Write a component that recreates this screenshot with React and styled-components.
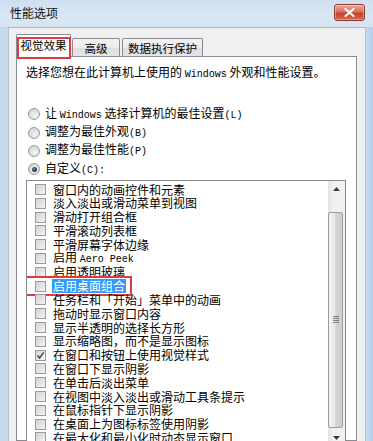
import styled, { createGlobalStyle } from 'styled-components';

const GlobalStyle = createGlobalStyle`
  html, body {
    margin: 0;
    padding: 0;
    background: #bcd3ea;
  }
  body {
    font-family: "Noto Sans CJK SC", "Noto Sans", sans-serif;
    color: #000;
  }
`;

const Window = styled.div`
  width: 373px;
  height: 441px;
  overflow: hidden;
  display: flex;
  flex-direction: column;
  background: linear-gradient(90deg, #c4d8ec 0%, #d4e3f2 30%, #dbe7f3 75%, #d2e1f1 97%, #b3cde9 100%);
`;

const TitleBar = styled.div`
  height: 27px;
  flex: none;
  display: flex;
  align-items: center;
  justify-content: space-between;
  padding: 0 8px 0 10px;
  background: linear-gradient(180deg, #cfdff0 0%, #d9e6f3 60%, #d6e4f2 100%);
`;

const Title = styled.span`
  font-size: 12px;
  line-height: 16px;
  margin-top: -2px;
  color: #111;
`;

const CloseButton = styled.div`
  width: 29px;
  height: 15px;
  margin-top: -3px;
  border: 1px solid #8b3b2c;
  border-radius: 3px;
  display: flex;
  align-items: center;
  justify-content: center;
  background: linear-gradient(180deg, #e9a89a 0%, #d9735f 45%, #c5432b 55%, #d6684f 100%);
  box-shadow: inset 0 0 0 1px rgba(255, 255, 255, 0.35);
`;

const Client = styled.div`
  flex: 1;
  margin: 0 7px 0 8px;
  padding: 6px 8px 0 7px;
  background: #f0f0f0;
  border-top: 1px solid #a9b8c8;
  border-left: 1px solid #b3c2d1;
  border-right: 1px solid #b3c2d1;
  display: flex;
  flex-direction: column;
  min-height: 0;
`;

const TabRow = styled.div`
  display: flex;
  align-items: flex-end;
  height: 22px;
  flex: none;
  position: relative;
  z-index: 1;
`;

const Tab = styled.div`
  position: relative;
  box-sizing: border-box;
  display: flex;
  align-items: center;
  justify-content: center;
  white-space: nowrap;
  font-size: 11.5px;
  border: 1px solid #898c95;
  border-bottom: none;
  border-radius: 2px 2px 0 0;
  flex: none;
  margin-right: ${({ $active }) => ($active ? '1px' : '2px')};
  height: ${({ $active }) => ($active ? '23px' : '18px')};
  margin-bottom: ${({ $active }) => ($active ? '-1px' : '0')};
  padding-bottom: ${({ $active }) => ($active ? '2px' : '0')};
  width: ${({ $w }) => $w}px;
  background: ${({ $active }) => ($active ? '#fff' : 'linear-gradient(180deg, #f3f3f3 0%, #ebebeb 50%, #dedede 51%, #e5e5e5 100%)')};
`;

const TabMark = styled.span`
  position: absolute;
  left: 0;
  right: -1px;
  top: 2px;
  bottom: -2px;
  border: 2px solid #e0393f;
  pointer-events: none;
`;

const Panel = styled.div`
  flex: 1;
  background: #fff;
  border: 1px solid #898c95;
  padding: 7px 10px 0 9px;
  display: flex;
  flex-direction: column;
  min-height: 0;
`;

const Latin = styled.span`
  font-family: "Liberation Mono", "DejaVu Sans Mono", monospace;
  font-size: 10px;
`;

const Description = styled.div`
  font-size: 12px;
  line-height: 16px;
  white-space: nowrap;
`;

const RadioGroup = styled.div`
  display: flex;
  flex-direction: column;
  margin-top: 22px;
`;

const RadioRow = styled.div`
  display: flex;
  align-items: center;
  height: 18.4px;
  padding-left: 2px;
  font-size: 12px;
  white-space: nowrap;
`;

const RadioLabel = styled.span`
  line-height: 16px;
`;

const RadioDot = styled.span`
  width: 10px;
  height: 10px;
  flex: none;
  border: 1px solid #999;
  border-radius: 50%;
  margin-right: 5px;
  display: flex;
  align-items: center;
  justify-content: center;
  background: radial-gradient(circle at 60% 65%, #f4f4f4 0%, #d8d8d8 70%, #c9c9c9 100%);

  &::after {
    content: '';
    display: ${({ $checked }) => ($checked ? 'block' : 'none')};
    width: 5px;
    height: 5px;
    border-radius: 50%;
    background: radial-gradient(circle at 40% 35%, #6a7d8f 0%, #233646 70%);
  }
`;

const ListBox = styled.div`
  margin-top: 1px;
  height: 266px;
  flex: none;
  border: 1px solid #828790;
  display: flex;
  background: #fff;
`;

const Items = styled.div`
  flex: 1;
  padding: 2px 0 0 8px;
  display: flex;
  flex-direction: column;
  overflow: hidden;
`;

const ItemRow = styled.div`
  display: flex;
  height: 13.8px;
  align-items: center;
  flex: none;
`;

const ItemInner = styled.span`
  position: relative;
  display: inline-flex;
  align-items: center;
  height: 100%;
`;

const Box = styled.span`
  width: 9px;
  height: 9px;
  flex: none;
  border: 1px solid #9a9a9a;
  margin-right: 6px;
  display: flex;
  align-items: center;
  justify-content: center;
  background: linear-gradient(135deg, #d4d4d4 0%, #e4e4e4 55%, #f6f6f6 100%);
`;

const ItemLabel = styled.span`
  font-size: 12px;
  line-height: 13.8px;
  white-space: nowrap;
  padding: 0 1px;
  color: ${({ $selected }) => ($selected ? '#fff' : '#000')};
  background: ${({ $selected }) => ($selected ? '#3399ff' : 'transparent')};
`;

const RowMark = styled.span`
  position: absolute;
  left: -10px;
  right: -6px;
  top: -3px;
  bottom: -3px;
  border: 2px solid #e0393f;
  pointer-events: none;
`;

const ScrollBar = styled.div`
  width: 17px;
  flex: none;
  display: flex;
  flex-direction: column;
  background: linear-gradient(90deg, #e3e3e3 0%, #f1f1f1 30%, #f1f1f1 100%);
`;

const ArrowButton = styled.div`
  height: 17px;
  flex: none;
  display: flex;
  align-items: center;
  justify-content: center;
`;

const Thumb = styled.div`
  height: 214px;
  margin: 14px 2px 2px 0;
  flex: none;
  border: 1px solid #9b9b9b;
  border-radius: 2px;
  display: flex;
  align-items: center;
  justify-content: center;
  background: linear-gradient(90deg, #f4f4f4 0%, #e6e6e6 45%, #d4d4d4 55%, #cfcfcf 100%);
`;

const Grip = styled.span`
  width: 6px;
  display: flex;
  flex-direction: column;
  gap: 1px;

  i {
    display: block;
    height: 1px;
    background: #7e7e7e;
  }
`;

const radios = [
  { key: 'L', label: <>让 <Latin>Windows</Latin> 选择计算机的最佳设置<Latin>(L)</Latin></> },
  { key: 'B', label: <>调整为最佳外观<Latin>(B)</Latin></> },
  { key: 'P', label: <>调整为最佳性能<Latin>(P)</Latin></> },
  { key: 'C', label: <>自定义<Latin>(C):</Latin></>, checked: true },
];

const items = [
  { label: '窗口内的动画控件和元素' },
  { label: '淡入淡出或滑动菜单到视图' },
  { label: '滑动打开组合框' },
  { label: '平滑滚动列表框' },
  { label: '平滑屏幕字体边缘' },
  { label: <>启用 <Latin>Aero Peek</Latin></> },
  { label: '启用透明玻璃' },
  { label: '启用桌面组合', selected: true },
  { label: '任务栏和「开始」菜单中的动画' },
  { label: '拖动时显示窗口内容' },
  { label: '显示半透明的选择长方形' },
  { label: '显示缩略图，而不是显示图标' },
  { label: '在窗口和按钮上使用视觉样式', checked: true },
  { label: '在窗口下显示阴影' },
  { label: '在单击后淡出菜单' },
  { label: '在视图中淡入淡出或滑动工具条提示' },
  { label: '在鼠标指针下显示阴影' },
  { label: '在桌面上为图标标签使用阴影' },
  { label: '在最大化和最小化时动态显示窗口' },
];

const Check = () => (
  <svg width="9" height="9" viewBox="0 0 9 9">
    <path d="M1.5 4.6 L3.6 7 L7.6 1.4" fill="none" stroke="#3a4a6a" strokeWidth="1.5" />
  </svg>
);

const Arrow = ({ down }) => (
  <svg width="7" height="4" viewBox="0 0 7 4">
    <path d={down ? 'M0 0 H7 L3.5 4 Z' : 'M0 4 H7 L3.5 0 Z'} fill="#3c3c3c" />
  </svg>
);

const App = () => (
  <>
    <GlobalStyle />
    <Window>
      <TitleBar>
        <Title>性能选项</Title>
        <CloseButton>
          <svg width="11" height="9" viewBox="0 0 11 9">
            <path d="M1.5 1 L9.5 8 M9.5 1 L1.5 8" stroke="#fff" strokeWidth="2.2" strokeLinecap="round" />
          </svg>
        </CloseButton>
      </TitleBar>
      <Client>
        <TabRow>
          <Tab $active $w={55}>
            视觉效果
            <TabMark />
          </Tab>
          <Tab $w={48}>高级</Tab>
          <Tab $w={81}>数据执行保护</Tab>
        </TabRow>
        <Panel>
          <Description>
            选择您想在此计算机上使用的 <Latin>Windows</Latin> 外观和性能设置。
          </Description>
          <RadioGroup>
            {radios.map((r) => (
              <RadioRow key={r.key}>
                <RadioDot $checked={r.checked} />
                <RadioLabel>{r.label}</RadioLabel>
              </RadioRow>
            ))}
          </RadioGroup>
          <ListBox>
            <Items>
              {items.map((it, i) => (
                <ItemRow key={i}>
                  <ItemInner>
                    <Box>{it.checked && <Check />}</Box>
                    <ItemLabel $selected={it.selected}>{it.label}</ItemLabel>
                    {it.selected && <RowMark />}
                  </ItemInner>
                </ItemRow>
              ))}
            </Items>
            <ScrollBar>
              <ArrowButton><Arrow /></ArrowButton>
              <Thumb>
                <Grip><i /><i /><i /><i /></Grip>
              </Thumb>
              <ArrowButton><Arrow down /></ArrowButton>
            </ScrollBar>
          </ListBox>
        </Panel>
      </Client>
    </Window>
  </>
);

export default App;
